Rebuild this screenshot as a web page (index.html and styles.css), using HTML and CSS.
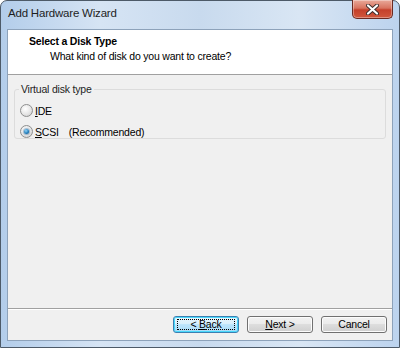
FILE: index.html
```html
<!DOCTYPE html>
<html lang="en">
<head>
    <meta charset="UTF-8">
    <meta name="viewport" content="width=device-width, initial-scale=1.0">
    <title>Add Hardware Wizard</title>
    <link rel="stylesheet" href="styles.css">
</head>
<body>

<div class="window">
    <div class="titlebar">
        <span class="title">Add Hardware Wizard</span>
        <button class="close" aria-label="Close">
            <svg width="13" height="11" viewBox="0 0 13 11">
                <path d="M2 1.5 L11 9.5 M11 1.5 L2 9.5" stroke="#3a2a2a" stroke-width="4" stroke-linecap="round"/>
                <path d="M2 1.5 L11 9.5 M11 1.5 L2 9.5" stroke="#ffffff" stroke-width="2.2" stroke-linecap="round"/>
            </svg>
        </button>
    </div>

    <div class="client">
        <div class="header">
            <div class="header-title">Select a Disk Type</div>
            <div class="header-sub">What kind of disk do you want to create?</div>
        </div>

        <div class="content">
            <fieldset class="group">
                <legend>Virtual disk type</legend>
                <label class="radio">
                    <span class="dot"></span>
                    <span><u>I</u>DE</span>
                </label>
                <label class="radio">
                    <span class="dot checked"></span>
                    <span class="scsi"><u>S</u>CSI</span>
                    <span>(Recommended)</span>
                </label>
            </fieldset>
        </div>

        <div class="footer">
            <button class="btn default"><span class="focus">&lt; <u>B</u>ack</span></button>
            <button class="btn"><span class="label"><u>N</u>ext &gt;</span></button>
            <button class="btn"><span class="label">Cancel</span></button>
        </div>
    </div>
</div>

</body>
</html>
```

FILE: styles.css
```css
html, body {
    margin: 0;
    padding: 0;
}

body {
    width: 400px;
    height: 348px;
    background-color: #ffffff;
    font-family: 'Liberation Sans', Arial, sans-serif;
    font-size: 10.5px;
    letter-spacing: -0.2px;
    color: #000000;
}

.window {
    box-sizing: border-box;
    width: 400px;
    height: 348px;
    display: flex;
    flex-direction: column;
    border: 1px solid #4d5a68;
    border-radius: 7px 7px 0 0;
    background: linear-gradient(90deg, #b3cdea 0%, #d6e4f4 25%, #c8daee 50%, #d9e6f4 75%, #bcd3ee 100%);
    padding: 0 6px 6px 6px;
}

.titlebar {
    height: 28px;
    display: flex;
    align-items: flex-start;
    justify-content: space-between;
}

.title {
    margin-top: 6px;
    margin-left: 1px;
    font-size: 11.5px;
    color: #1e1e1e;
}

.close {
    width: 41px;
    height: 19px;
    margin: -1px 0 0 0;
    padding: 0;
    display: flex;
    align-items: center;
    justify-content: center;
    border: 1px solid #6b2a22;
    border-top: none;
    border-radius: 0 0 5px 5px;
    background: linear-gradient(180deg, #e9a99a 0%, #d8735f 45%, #c5402a 55%, #d0573d 100%);
    box-shadow: inset 0 0 0 1px rgba(255, 255, 255, 0.35);
}

.client {
    flex: 1;
    display: flex;
    flex-direction: column;
    background-color: #f0f0f0;
    border: 1px solid #8da2ba;
}

.header {
    height: 45px;
    box-sizing: border-box;
    background-color: #ffffff;
    border-bottom: 1px solid #a0a0a0;
    padding: 4px 0 0 21px;
}

.header-title {
    font-weight: bold;
    line-height: 15px;
}

.header-sub {
    padding-left: 21px;
    line-height: 15px;
}

.content {
    flex: 1;
    padding: 7px 6px 0 6px;
}

.group {
    margin: 0;
    padding: 4px 6px 6px 5px;
    border: 1px solid #dcdcdc;
    border-radius: 3px;
    height: 57px;
    box-sizing: border-box;
}

.group legend {
    padding: 0 2px;
    margin-left: -1px;
    color: #1e1e1e;
    line-height: 14px;
}

.radio {
    display: flex;
    align-items: center;
    height: 21px;
    gap: 2px;
}

.dot {
    box-sizing: border-box;
    width: 13px;
    height: 13px;
    border-radius: 50%;
    border: 1px solid #8e8f8f;
    background: radial-gradient(circle at 40% 35%, #ffffff 0%, #e6e6e6 55%, #c8c8c8 100%);
    display: flex;
    align-items: center;
    justify-content: center;
}

.dot.checked::after {
    content: "";
    width: 5px;
    height: 5px;
    border-radius: 50%;
    background: radial-gradient(circle at 40% 35%, #8fd3f8 0%, #1d79b8 60%, #0a4a7a 100%);
    box-shadow: 0 0 1px 1px rgba(30, 90, 140, 0.4);
}

.scsi {
    margin-right: 8px;
}

.footer {
    height: 31px;
    border-top: 1px solid #a0a0a0;
    box-shadow: inset 0 1px 0 #ffffff;
    display: flex;
    justify-content: flex-end;
    align-items: center;
    gap: 8px;
    padding: 0 5px 0 0;
}

.btn {
    width: 66px;
    height: 17px;
    padding: 0;
    font-family: inherit;
    font-size: 10.5px;
    letter-spacing: -0.2px;
    color: #000000;
    border: 1px solid #707070;
    border-radius: 3px;
    background: linear-gradient(180deg, #f2f2f2 0%, #ebebeb 45%, #dddddd 50%, #cfcfcf 100%);
    box-shadow: inset 0 0 0 1px #fcfcfc;
    display: flex;
    align-items: center;
    justify-content: center;
}

.btn.default {
    border-color: #3c7fb1;
    box-shadow: inset 0 0 0 1px #48d8fb;
    background: linear-gradient(180deg, #eaf6fd 0%, #d9f0fc 45%, #bee6fd 50%, #a7d9f5 100%);
}

.label {
    line-height: 13px;
}

.focus {
    display: block;
    box-sizing: border-box;
    width: 58px;
    height: 11px;
    border: 1px dotted #000000;
    text-align: center;
    line-height: 9px;
}
```
